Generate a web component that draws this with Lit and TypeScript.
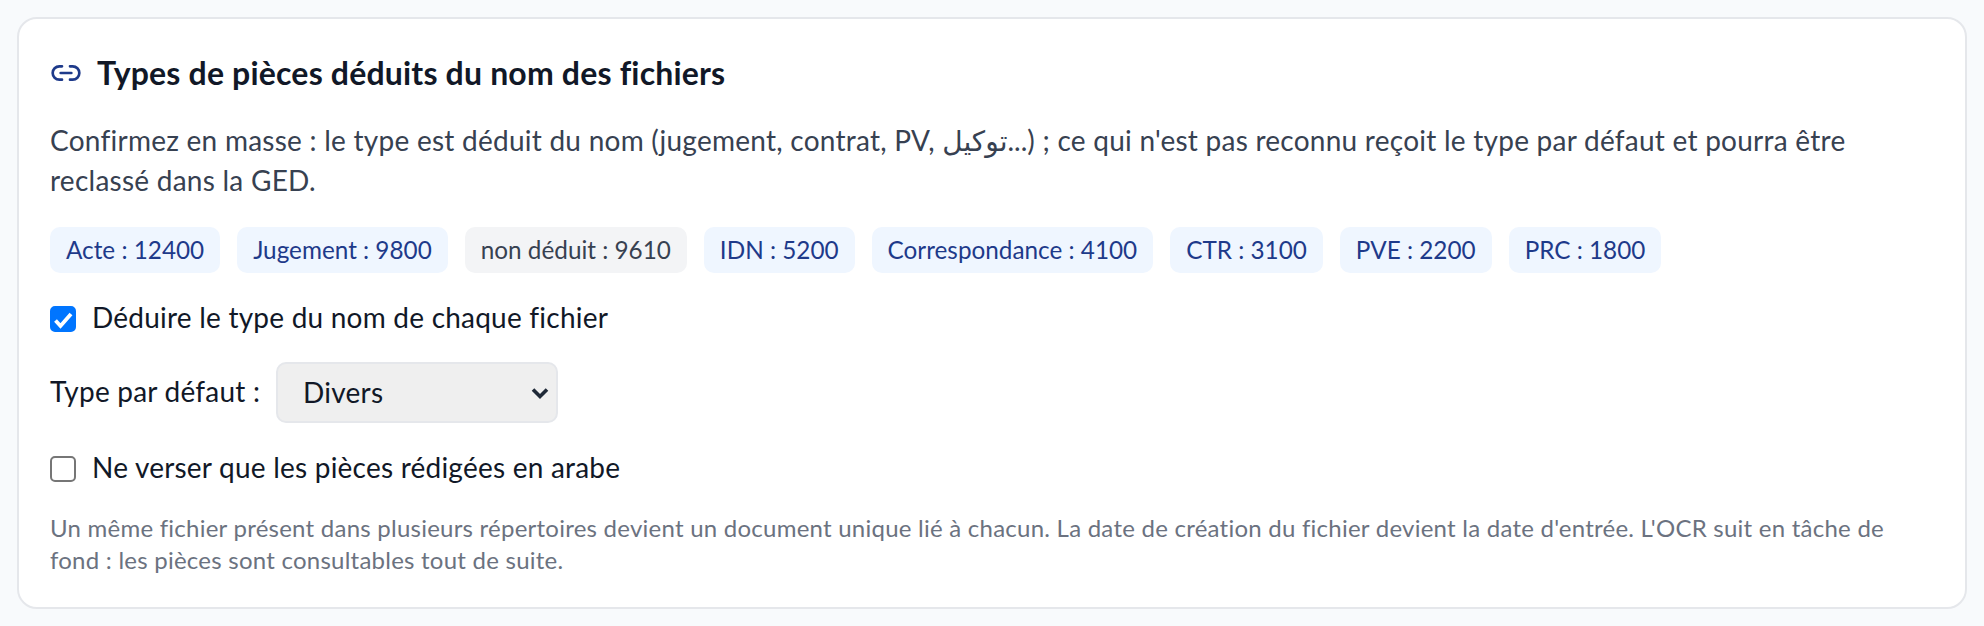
import { LitElement, html, css } from "lit";
import { customElement } from "lit/decorators.js";

const CHIPS: [string, boolean][] = [
  ["Acte : 12400", false],
  ["Jugement : 9800", false],
  ["non déduit : 9610", true],
  ["IDN : 5200", false],
  ["Correspondance : 4100", false],
  ["CTR : 3100", false],
  ["PVE : 2200", false],
  ["PRC : 1800", false],
];

@customElement("app-root")
export class AppRoot extends LitElement {
  static styles = css`
    :host {
      display: block;
      min-height: 626px;
      box-sizing: border-box;
      padding: 17px;
      background: #f8fafc;
      font-family: "Lato", "DejaVu Sans", sans-serif;
      color: #111827;
    }
    .card {
      box-sizing: border-box;
      height: 592px;
      background: #fff;
      border: 2px solid #e5e7eb;
      border-radius: 20px;
      padding: 31px;
      display: flex;
      flex-direction: column;
    }
    .head {
      display: flex;
      align-items: center;
      gap: 15px;
      height: 46px;
    }
    .head svg {
      width: 32px;
      height: 32px;
      color: #1e3a8a;
      flex: none;
    }
    h2 {
      margin: 0;
      font-size: 32px;
      font-weight: 700;
      line-height: 46px;
      letter-spacing: 0.18px;
    }
    .desc {
      margin: 24px 0 0;
      max-width: 1870px;
      font-size: 28px;
      line-height: 40px;
      letter-spacing: 0.25px;
      color: #374151;
    }
    .chips {
      display: flex;
      gap: 17px;
      margin-top: 27px;
    }
    .chip {
      box-sizing: border-box;
      height: 46px;
      display: flex;
      align-items: center;
      padding: 0 16px 2px;
      border-radius: 10px;
      background: #eff6ff;
      color: #1e3a8a;
      font-size: 24.3px;
    }
    .chip.muted {
      background: #f3f4f6;
      color: #374151;
    }
    .check {
      display: flex;
      align-items: center;
      gap: 16px;
      height: 40px;
      font-size: 28px;
      letter-spacing: 0.22px;
    }
    .check span {
      padding-bottom: 5px;
    }
    .check input {
      appearance: none;
      box-sizing: border-box;
      width: 26px;
      height: 26px;
      margin: 0;
      flex: none;
      background: #fff;
      border: 2px solid #767676;
      border-radius: 5px;
    }
    .check input:checked {
      border-color: #0075ff;
      background: #0075ff url("data:image/svg+xml,%3Csvg xmlns='http://www.w3.org/2000/svg' viewBox='0 0 26 26'%3E%3Cpath d='M5.5 14.5l5 5.5L21 8' fill='none' stroke='%23fff' stroke-width='3.8'/%3E%3C/svg%3E") center / 26px 26px no-repeat;
      background-origin: border-box;
    }
    .first {
      margin-top: 26px;
    }
    .type {
      display: flex;
      align-items: center;
      gap: 16px;
      margin-top: 23px;
      font-size: 28px;
      letter-spacing: 0.22px;
    }
    .type span {
      padding-bottom: 3px;
    }
    select {
      appearance: none;
      width: 282px;
      height: 61px;
      box-sizing: border-box;
      padding: 0 40px 2px 25px;
      font: inherit;
      letter-spacing: inherit;
      color: #111827;
      background: #efefef url("data:image/svg+xml,%3Csvg xmlns='http://www.w3.org/2000/svg' viewBox='0 0 20 14'%3E%3Cpath d='M3 3.5l7 7 7-7' fill='none' stroke='%231f2937' stroke-width='3.6'/%3E%3C/svg%3E") right 6px center / 20px 14px no-repeat;
      border: 2px solid #e5e7eb;
      border-radius: 10px;
    }
    .second {
      margin-top: 26px;
    }
    .hint {
      margin: 23px 0 0;
      max-width: 1850px;
      font-size: 24px;
      line-height: 32px;
      letter-spacing: 0.24px;
      color: #6b7280;
    }
  `;

  render() {
    return html`
      <section class="card">
        <div class="head">
          <svg viewBox="0 0 24 24" fill="none" stroke="currentColor" stroke-width="2" stroke-linecap="round" stroke-linejoin="round">
            <path d="M9 17H7A5 5 0 0 1 7 7h2"></path>
            <path d="M15 7h2a5 5 0 1 1 0 10h-2"></path>
            <line x1="8" y1="12" x2="16" y2="12"></line>
          </svg>
          <h2>Types de pièces déduits du nom des fichiers</h2>
        </div>
        <p class="desc">Confirmez en masse : le type est déduit du nom (jugement, contrat, PV, توكيل...) ; ce qui n'est pas reconnu reçoit le type par défaut et pourra être reclassé dans la GED.</p>
        <div class="chips">
          ${CHIPS.map(([t, m]) => html`<span class="chip ${m ? "muted" : ""}">${t}</span>`)}
        </div>
        <label class="check first"><input type="checkbox" checked /><span>Déduire le type du nom de chaque fichier</span></label>
        <label class="type"><span>Type par défaut :</span>
          <select><option>Divers</option></select>
        </label>
        <label class="check second"><input type="checkbox" /><span>Ne verser que les pièces rédigées en arabe</span></label>
        <p class="hint">Un même fichier présent dans plusieurs répertoires devient un document unique lié à chacun. La date de création du fichier devient la date d'entrée. L'OCR suit en tâche de fond : les pièces sont consultables tout de suite.</p>
      </section>
    `;
  }
}
